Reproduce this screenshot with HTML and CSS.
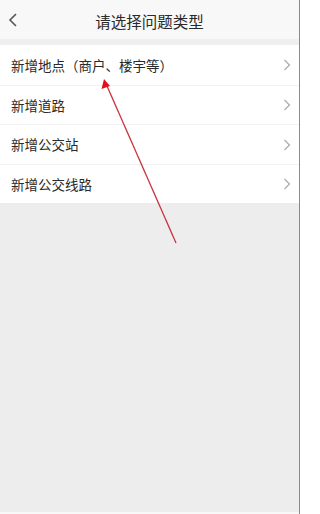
FILE: index.html
```html
<!DOCTYPE html>
<html lang="zh">
<head>
<meta charset="utf-8">
<link rel="stylesheet" href="styles.css">
</head>
<body>
<div class="page">
  <header class="bar">
    <svg class="back" width="12" height="16" viewBox="0 0 12 16"><path d="M9 2 L3 8 L9 14" fill="none" stroke="#555" stroke-width="1.6"/></svg>
    <h1 class="title">请选择问题类型</h1>
  </header>
  <div class="sep"></div>
  <ul class="list">
    <li class="row"><span>新增地点（商户、楼宇等）</span><svg class="chev" width="8" height="14" viewBox="0 0 8 14"><path d="M1.5 2 L6.5 7 L1.5 12" fill="none" stroke="#aaa" stroke-width="1.2"/></svg></li>
    <li class="row"><span>新增道路</span><svg class="chev" width="8" height="14" viewBox="0 0 8 14"><path d="M1.5 2 L6.5 7 L1.5 12" fill="none" stroke="#aaa" stroke-width="1.2"/></svg></li>
    <li class="row"><span>新增公交站</span><svg class="chev" width="8" height="14" viewBox="0 0 8 14"><path d="M1.5 2 L6.5 7 L1.5 12" fill="none" stroke="#aaa" stroke-width="1.2"/></svg></li>
    <li class="row"><span>新增公交线路</span><svg class="chev" width="8" height="14" viewBox="0 0 8 14"><path d="M1.5 2 L6.5 7 L1.5 12" fill="none" stroke="#aaa" stroke-width="1.2"/></svg></li>
  </ul>
  <div class="rest"></div>
  <svg class="arrow" width="300" height="514" viewBox="0 0 300 514">
    <line x1="176" y1="243" x2="107" y2="86" stroke="#c8323c" stroke-width="1.3"/>
    <polygon points="104,79 101.5,89 110,86" fill="#e0101e"/>
  </svg>
</div>
</body>
</html>
```
FILE: styles.css
```css
html, body { margin: 0; padding: 0; }
body {
  font-family: "Noto Sans CJK SC", "Noto Sans", sans-serif;
  background: #fff;
}
.page {
  position: relative;
  width: 299px;
  height: 514px;
  border-right: 1px solid #8a8a8a;
  display: flex;
  flex-direction: column;
  background: #ededed;
}
.bar {
  height: 39px;
  background: #f8f8f8;
  display: flex;
  align-items: center;
  justify-content: center;
  position: relative;
  flex: none;
}
.back { position: absolute; left: 7px; top: 12px; }
.title {
  margin: 2px 0 0;
  font-size: 15.5px;
  font-weight: normal;
  color: #2a2a2a;
}
.sep { height: 6px; background: #efefef; flex: none; }
.list {
  list-style: none;
  margin: 0;
  padding: 0;
  background: #fff;
  flex: none;
}
.row {
  height: 39.5px;
  display: flex;
  align-items: center;
  justify-content: space-between;
  padding: 0 8px 0 11px;
  font-size: 13.5px;
  color: #2a2a2a;
  position: relative;
  box-sizing: border-box;
}
.row + .row { border-top: 1px solid #f2f2f2; }
.chev { margin-top: 1px; }
.rest { flex: 1; background: #ededed; border-bottom: 2px solid #f8f8f8; }
.arrow { position: absolute; left: 0; top: 0; pointer-events: none; }
```
